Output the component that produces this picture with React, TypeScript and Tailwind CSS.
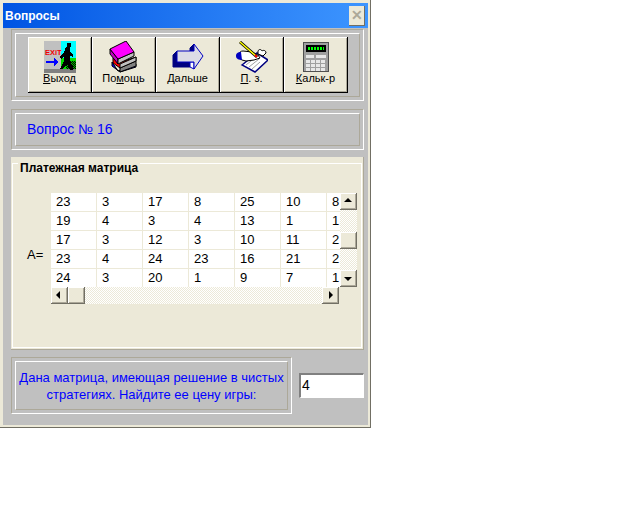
import type { ReactNode } from "react";

const FONT = "font-['Liberation_Sans',Arial,sans-serif]";

// double bevel frame used round the three gray panels
function Frame({ className, children }: { className: string; children: ReactNode }) {
  return (
    <div className={`shrink-0 border border-t-[#aca899] border-l-[#aca899] border-r-white border-b-white p-[3px] ${className}`}>
      <div className="h-full border border-t-white border-l-white border-r-[#aca899] border-b-[#aca899]">{children}</div>
    </div>
  );
}

function ExitIcon() {
  return (
    <svg width="32" height="32" viewBox="0 0 32 32" shapeRendering="crispEdges">
      <defs>
        <pattern id="green" width="2" height="2" patternUnits="userSpaceOnUse">
          <rect width="2" height="2" fill="#00c000" />
          <rect width="1" height="1" fill="#000" />
          <rect x="1" y="1" width="1" height="1" fill="#000" />
        </pattern>
      </defs>
      <rect width="32" height="32" fill="#c0c0c0" />
      <rect x="17" y="0" width="15" height="17" fill="#00ffff" />
      <rect x="17" y="17" width="15" height="11" fill="#00e000" />
      <rect x="22" y="20" width="10" height="8" fill="url(#green)" />
      <rect y="28" width="32" height="4" fill="#808080" />
      <text x="1" y="14" fontSize="7.5" fontWeight="700" fill="#f00000" fontFamily="Liberation Sans, sans-serif">EXiT</text>
      <path d="M2 20h8v-3l5 4-5 4v-3H2z" fill="#0000ff" />
      <path d="M22 6h4v5l3 3v2l-3-1v5l3 5v4h-3l-3-6-4 5h-3l4-8v-5l-3 3-1-2 4-5z" fill="#000" />
      <rect x="23" y="2" width="4" height="4" fill="#000" />
    </svg>
  );
}

function BooksIcon() {
  return (
    <svg width="32" height="32" viewBox="0 0 32 32">
      <path d="M4 21l6 9 18-7v3l-16 5-8-6z" fill="#0000ff" stroke="#000" />
      <path d="M12 31V26l16-6v5z" fill="#808080" stroke="#000" />
      <path d="M5 17l5 5 18-6v4l-16 7-7-5z" fill="#ff0000" stroke="#000" />
      <path d="M12 27v-4l16-7v4z" fill="#c0c0c0" stroke="#000" />
      <path d="M2 8l8 10v5L2 13z" fill="#c000c0" stroke="#000" />
      <path d="M10 18l16-7v4l-16 8z" fill="#c0c0c0" stroke="#000" />
      <path d="M2 8L18 0l8 11-16 7z" fill="#ff00ff" stroke="#000" />
    </svg>
  );
}

function ArrowIcon() {
  return (
    <svg width="32" height="32" viewBox="0 0 32 32">
      <path d="M1 14l4-4v11h13v5H1z" fill="#000080" stroke="#000080" />
      <path d="M18 7l4-4v7h-4z" fill="#000080" stroke="#000080" />
      <path d="M18 21v5l4 2v-7z" fill="#ffffff" stroke="#0000c0" />
      <path d="M5 10h17V3l9 12-9 13v-7H5z" fill="#dcdce6" stroke="#0000c0" />
    </svg>
  );
}

function NotesIcon() {
  return (
    <svg width="32" height="32" viewBox="0 0 32 32">
      <path d="M6 24l15-12 11 7-13 12z" fill="#fff" stroke="#000080" strokeWidth="1.5" />
      <path d="M10 24l10-8M13 26l10-8M16 28l8-7" stroke="#a0a0a0" />
      <path d="M22 10c1-2 3-2 4 0 1-1 4-1 4 2l-3 3-5-2z" fill="#fff" stroke="#000" />
      <path d="M3 14c0-3 2-4 4-4l9 1 6 3 2 3-6 2-8 1-4-1c-2-1-3-3-3-5z" fill="#fff" stroke="#000" />
      <path d="M0 15c0-3 2-4 5-4l1 8c-3 0-6-1-6-4z" fill="#0000c0" />
      <path d="M4 1l17 15" stroke="#000" strokeWidth="3" />
      <path d="M4 1l17 15" stroke="#ffff00" strokeWidth="1.5" />
      <path d="M19 14l2 2" stroke="#ff0000" strokeWidth="2" />
    </svg>
  );
}

function CalcIcon() {
  const keys = [0, 1, 2, 3];
  return (
    <svg width="26" height="30" viewBox="0 0 26 30" shapeRendering="crispEdges">
      <rect x="0.5" y="0.5" width="25" height="29" fill="#a0a0a0" stroke="#505050" />
      <rect x="3" y="3" width="20" height="7" fill="#000" />
      <path d="M5 5h2v3H5zM8 5h2v3H8zM11 5h2v3h-2zM14 5h2v3h-2zM17 5h2v3h-2zM20 5h1v3h-1z" fill="#00ff00" />
      <rect x="3" y="13" width="8" height="3" fill="#e8e8e8" />
      <rect x="13" y="13" width="10" height="3" fill="#e8e8e8" />
      {[18, 22, 26].map((y) =>
        keys.map((k) => <rect key={`${y}-${k}`} x={3 + k * 5} y={y} width="4" height="3" fill="#e8e8e8" />)
      )}
    </svg>
  );
}

function ToolButton({ icon, pre = "", mark, rest }: { icon: ReactNode; pre?: string; mark: string; rest: string }) {
  return (
    <button className="flex h-[56px] w-[64px] flex-col items-center border-r border-b border-black bg-[#ece9d8] shadow-[inset_1px_1px_0_#fff,inset_-1px_-1px_0_#aca899]">
      <span className="mt-[4px] flex h-[32px] items-center">{icon}</span>
      <span className="mt-[-2px] text-[11px] leading-[14px] text-black">
        {pre}
        <span className="underline">{mark}</span>
        {rest}
      </span>
    </button>
  );
}

function ScrollButton({ dir }: { dir: "up" | "down" | "left" | "right" }) {
  const points = {
    up: "4,8 8,4 12,8",
    down: "4,6 8,10 12,6",
    left: "9,3 5,7 9,11",
    right: "7,3 11,7 7,11",
  }[dir];
  return (
    <div className="h-[17px] w-[17px] shrink-0 border-r border-b border-[#716f64] bg-[#ece9d8] shadow-[inset_1px_1px_0_#fff,inset_-1px_-1px_0_#aca899]">
      <svg width="16" height="16" viewBox="0 0 16 14">
        <polygon points={points} fill="#000" />
      </svg>
    </div>
  );
}

const CHECKER = "bg-[repeating-conic-gradient(#ffffff_0_25%,#ece9d8_0_50%)] bg-[length:2px_2px]";

const ROWS = [
  ["23", "3", "17", "8", "25", "10", "8"],
  ["19", "4", "3", "4", "13", "1", "1"],
  ["17", "3", "12", "3", "10", "11", "2"],
  ["23", "4", "24", "23", "16", "21", "2"],
  ["24", "3", "20", "1", "9", "7", "1"],
];

function Grid() {
  return (
    <div className="w-[306px]">
      <div className="flex h-[94px]">
        <div className="w-[289px] overflow-hidden bg-[#ece9d8]">
          {ROWS.map((row, i) => (
            <div key={i} className="mb-px flex h-[18px] w-[340px] gap-px">
              {row.map((cell, j) => (
                <div key={j} className="w-[45px] shrink-0 bg-white pl-[5px] text-[13px] leading-[18px] text-black">
                  {cell}
                </div>
              ))}
            </div>
          ))}
        </div>
        <div className={`flex w-[17px] flex-col ${CHECKER}`}>
          <ScrollButton dir="up" />
          <div className="mt-[22px] h-[17px] w-[17px] border-r border-b border-[#716f64] bg-[#ece9d8] shadow-[inset_1px_1px_0_#fff,inset_-1px_-1px_0_#aca899]" />
          <div className="mt-auto">
            <ScrollButton dir="down" />
          </div>
        </div>
      </div>
      <div className={`flex h-[17px] w-[288px] ${CHECKER}`}>
        <ScrollButton dir="left" />
        <div className="h-[17px] w-[17px] border-r border-b border-[#716f64] bg-[#ece9d8] shadow-[inset_1px_1px_0_#fff,inset_-1px_-1px_0_#aca899]" />
        <div className="ml-auto">
          <ScrollButton dir="right" />
        </div>
      </div>
    </div>
  );
}

export default function App() {
  return (
    <div className={`${FONT} h-[428px] w-[371px] border-r border-b border-[#716f64] bg-[#ece9d8] pt-[3px] pr-[2px] pb-[2px] pl-[3px]`}>
      <div className="flex h-[25px] items-center justify-between bg-gradient-to-r from-[#0054e3] to-[#3d95ff] pr-[3px] pl-[2px]">
        <span className="text-[12px] font-bold text-white">Вопросы</span>
        <span className="flex h-[20px] w-[16px] items-center justify-center border-r border-b border-[#716f64] bg-[#ece9d8] text-[14px] font-bold leading-none text-[#aca899]">
          ✕
        </span>
      </div>
      <div className="h-[397px] bg-[#c0c0c0] pt-[1px] pl-[8px]">
        <Frame className="h-[72px] w-[353px]">
          <div className="flex pt-[3px] pl-[12px]">
            <ToolButton icon={<ExitIcon />} mark="В" rest="ыход" />
            <ToolButton icon={<BooksIcon />} pre="По" mark="м" rest="ощь" />
            <ToolButton icon={<ArrowIcon />} mark="Д" rest="альше" />
            <ToolButton icon={<NotesIcon />} mark="П" rest=". з." />
            <ToolButton icon={<CalcIcon />} mark="К" rest="альк-р" />
          </div>
        </Frame>
        <Frame className="mt-[8px] h-[41px] w-[353px]">
          <div className="flex h-full items-center pl-[11px] text-[14px] text-[#0000ff]">Вопрос № 16</div>
        </Frame>
        <div className="mt-[7px] h-[193px] w-[353px] border-r border-b border-[#aca899] bg-[#ece9d8] pt-[6px] pl-[1px]">
          <div className="relative h-[185px] w-[350px] border border-white">
            <span className="absolute top-[-3px] left-[5px] bg-[#ece9d8] px-[2px] text-[12px] font-bold leading-[14px] text-black">
              Платежная матрица
            </span>
            <div className="flex items-center pt-[29px] pl-[14px]">
              <span className="mt-[12px] w-[24px] text-[13px] text-black">A=</span>
              <Grid />
            </div>
          </div>
        </div>
        <div className="mt-[7px] flex items-center">
          <Frame className="h-[57px] w-[281px]">
            <div className="flex h-full items-center justify-center text-center text-[13px] leading-[17px] whitespace-nowrap text-[#0000ff]">
              <span>
                Дана матрица, имеющая решение в чистых
                <br />
                стратегиях. Найдите ее цену игры:
              </span>
            </div>
          </Frame>
          <div className="ml-[7px] h-[25px] w-[65px] border-t-2 border-r border-b border-l-2 border-t-[#808080] border-r-white border-b-white border-l-[#808080] bg-white pl-px text-[14px] leading-[21px] text-black">
            4
          </div>
        </div>
      </div>
    </div>
  );
}
